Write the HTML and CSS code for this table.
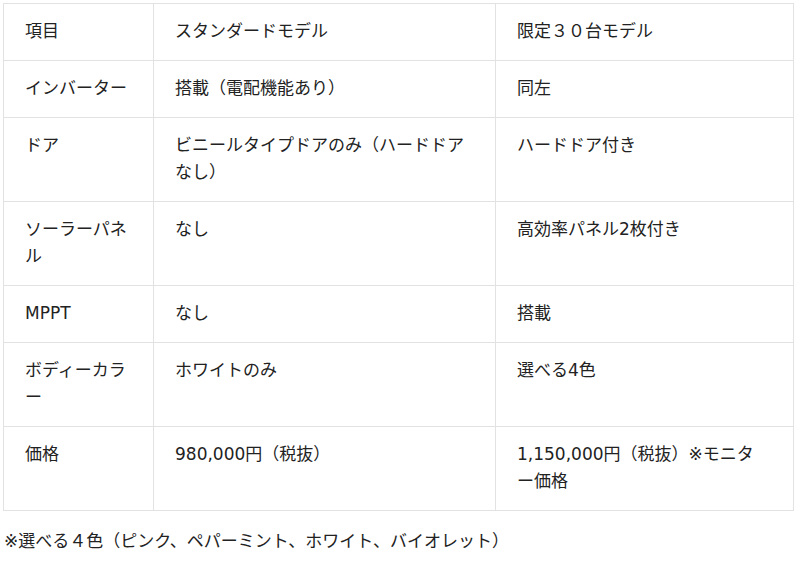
FILE: index.html
```html
<!DOCTYPE html>
<html lang="ja">
<head>
<meta charset="utf-8">
<link rel="stylesheet" href="styles.css">
</head>
<body>
<div class="page">
  <table class="spec">
    <colgroup>
      <col class="c1"><col class="c2"><col class="c3">
    </colgroup>
    <tbody>
      <tr><td>項目</td><td>スタンダードモデル</td><td>限定３０台モデル</td></tr>
      <tr><td>インバーター</td><td>搭載（電配機能あり）</td><td>同左</td></tr>
      <tr><td>ドア</td><td>ビニールタイプドアのみ（ハードドアなし）</td><td>ハードドア付き</td></tr>
      <tr><td>ソーラーパネル</td><td>なし</td><td>高効率パネル2枚付き</td></tr>
      <tr><td>MPPT</td><td>なし</td><td>搭載</td></tr>
      <tr><td>ボディーカラー</td><td>ホワイトのみ</td><td>選べる4色</td></tr>
      <tr><td>価格</td><td>980,000円（税抜）</td><td>1,150,000円（税抜）※モニター価格</td></tr>
    </tbody>
  </table>
  <p class="note">※選べる４色（ピンク、ペパーミント、ホワイト、バイオレット）</p>
</div>
</body>
</html>
```

FILE: styles.css
```css
html, body {
  margin: 0;
  padding: 0;
  background: #ffffff;
}
.page {
  padding: 3px 0 0 3px;
  font-family: "DejaVu Sans", "Noto Sans CJK JP", sans-serif;
  font-size: 17px;
  line-height: 27px;
  color: #222222;
}
.spec {
  width: 790px;
  border-collapse: collapse;
  table-layout: fixed;
}
.c1 { width: 150px; }
.c2 { width: 342px; }
.c3 { width: 298px; }
.spec td {
  border: 1px solid #e2e2e2;
  padding: 14px 20px 15px 21px;
  vertical-align: top;
  word-break: break-all;
}
.spec td:last-child {
  padding-right: 26px;
}
.note {
  margin: 17px 0 0 1px;
}
```
